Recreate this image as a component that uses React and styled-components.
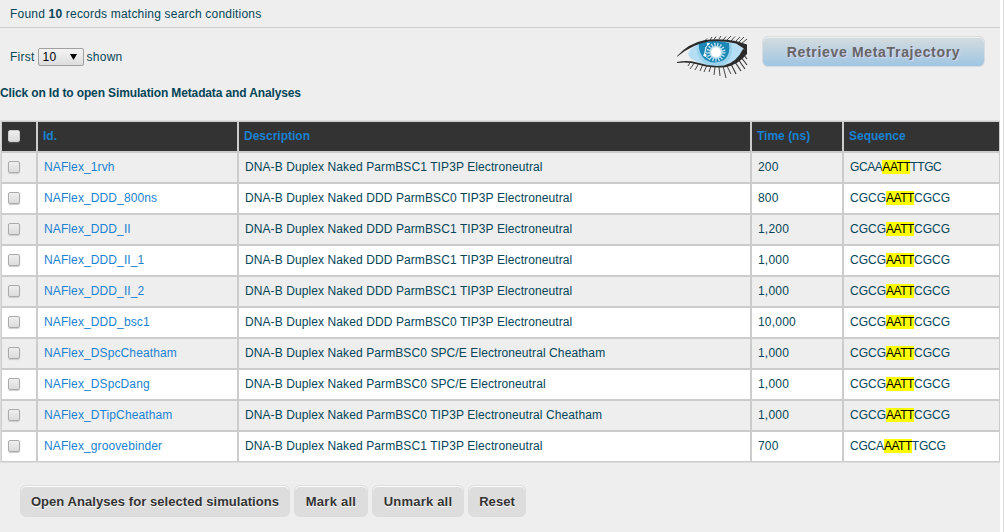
import React from "react";
import styled, { createGlobalStyle } from "styled-components";

const GlobalStyle = createGlobalStyle`
  *, *::before, *::after { box-sizing: border-box; }
  body { margin: 0; background: #fff; overflow: hidden; }
`;

const Page = styled.div`
  width: 1004px;
  height: 532px;
  padding-right: 3px;
  border-right: 1px solid #ddd;
  background: #fff;
  font: 12px/16px "Liberation Sans", Arial, sans-serif;
  color: #044558;
  white-space: nowrap;
`;

const Panel = styled.main`
  width: 1000px;
  height: 532px;
  overflow: hidden;
  background: #eee;
`;

const Summary = styled.div`
  height: 28px;
  padding: 6px 10px;
  border-bottom: 1px solid #ccc;
  letter-spacing: 0.2px;
`;

const Toolbar = styled.div`
  display: flex;
  align-items: flex-start;
  height: 56px;
  padding: 7px 15px 0 10px;
`;

const Limit = styled.label`
  display: flex;
  align-items: center;
  gap: 3px;
  flex: 1;
  padding-top: 13px;
  letter-spacing: 0.25px;
`;

const Picker = styled.span`
  display: flex;
  align-items: center;
  justify-content: space-between;
  width: 46px;
  height: 18px;
  padding: 0 6px 0 4px;
  border: 1px solid #a0a0a0;
  border-radius: 2px;
  background: linear-gradient(#f4f4f4, #ddd);
  color: #000;
`;

const Eye = styled.svg`
  width: 71px;
  height: 44px;
  margin-right: 14px;
`;

const Retrieve = styled.button`
  width: 223px;
  height: 31px;
  margin-top: 1px;
  padding: 1px 0 0;
  border: 1px solid #d9dcdf;
  border-radius: 6px;
  background: linear-gradient(#d6dcdf, #9fc5e2);
  box-shadow: inset 0 1px 0 #eef1f3;
  color: #666;
  font: bold 14px "Liberation Sans", Arial, sans-serif;
  letter-spacing: 0.68px;
  text-shadow: 1px 1px 0 #ddd6f2;
`;

const Hint = styled.h2`
  height: 37px;
  margin: 0;
  padding-top: 1px;
  font-size: 12px;
  line-height: 16px;
  letter-spacing: -0.13px;
`;

const Table = styled.div`
  display: grid;
  grid-template-columns: 34px 199px 511px 90px 155px;
  grid-auto-rows: 29px;
  gap: 2px;
  width: 999px;
  margin-left: 1px;
  padding: 1px;
  background: #ccc;
  box-shadow: 0 0 0 1px #ddd;
`;

const Cell = styled.div`
  padding: 6px 6px 0;
  background: ${(p) => (p.$odd ? "#eee" : "#fff")};
  letter-spacing: ${(p) => p.$spacing || 0}px;
`;

const HeadCell = styled.div`
  padding: 6px 5px 0;
  background: #333;
  color: #1a82d2;
  font-weight: bold;
`;

const Link = styled.a`
  color: #1a82d2;
`;

const Check = styled.span`
  display: block;
  width: 12px;
  height: 12px;
  margin: 2px 0 0 ${(p) => (p.$head ? 1 : 0)}px;
  border: 1px solid ${(p) => (p.$head ? "#ccc" : "#aaa")};
  border-radius: 2px;
  background: linear-gradient(#eee, #dcdcdc);
  box-shadow: 0 1px 1px ${(p) => (p.$head ? "#555" : "#ccc")};
`;

const Highlight = styled.mark`
  background: #ff0;
  color: #000;
  letter-spacing: -0.45px;
`;

const Actions = styled.div`
  display: flex;
  gap: 4px;
  padding: 23px 20px 0;
`;

const Action = styled.button`
  width: ${(p) => p.$width}px;
  height: 32px;
  padding: 0;
  border: 1px solid #ddd;
  border-radius: 6px;
  background: #ddd;
  box-shadow: inset 0 1px 0 #fff;
  color: #333;
  font: bold 13px "Liberation Sans", Arial, sans-serif;
  letter-spacing: ${(p) => p.$spacing || 0.06}px;
  text-shadow: 0 1px 0 #fff;
`;

const rows = [
  ["NAFlex_1rvh", "DNA-B Duplex Naked ParmBSC1 TIP3P Electroneutral", "200", "GCAA", "TTGC", -0.42],
  ["NAFlex_DDD_800ns", "DNA-B Duplex Naked DDD ParmBSC0 TIP3P Electroneutral", "800", "CGCG", "CGCG", 0],
  ["NAFlex_DDD_II", "DNA-B Duplex Naked DDD ParmBSC1 TIP3P Electroneutral", "1,200", "CGCG", "CGCG", 0],
  ["NAFlex_DDD_II_1", "DNA-B Duplex Naked DDD ParmBSC1 TIP3P Electroneutral", "1,000", "CGCG", "CGCG", 0],
  ["NAFlex_DDD_II_2", "DNA-B Duplex Naked DDD ParmBSC1 TIP3P Electroneutral", "1,000", "CGCG", "CGCG", 0],
  ["NAFlex_DDD_bsc1", "DNA-B Duplex Naked DDD ParmBSC0 TIP3P Electroneutral", "10,000", "CGCG", "CGCG", 0],
  ["NAFlex_DSpcCheatham", "DNA-B Duplex Naked ParmBSC0 SPC/E Electroneutral Cheatham", "1,000", "CGCG", "CGCG", 0],
  ["NAFlex_DSpcDang", "DNA-B Duplex Naked ParmBSC0 SPC/E Electroneutral", "1,000", "CGCG", "CGCG", 0],
  ["NAFlex_DTipCheatham", "DNA-B Duplex Naked ParmBSC0 TIP3P Electroneutral Cheatham", "1,000", "CGCG", "CGCG", 0],
  ["NAFlex_groovebinder", "DNA-B Duplex Naked ParmBSC1 TIP3P Electroneutral", "700", "CGCA", "TGCG", -0.2],
];

function EyeLogo() {
  return (
    <Eye viewBox="0 0 71 44" aria-hidden="true">
      <path d="M11 19Q15 10 26 7Q42 4 58 8L67 14Q65 24 56 29Q44 34 28 30Q13 26 11 19Z" fill="#b5def5" />
      <path d="M20 9Q38 3 55 9Q57 22 48 29Q38 34 27 28Q18 21 20 9Z" fill="#9bd3ef" />
      <path d="M22 8Q38 4 52 8Q54 19 47 25Q37 30 28 24.5Q21 18 22 8Z" fill="#1c86b4" />
      <circle cx="39" cy="17.3" r="7.8" fill="none" stroke="#c9e8f5" strokeWidth="3.4" strokeDasharray="1.2 1.7" />
      <circle cx="39" cy="17.3" r="6.6" fill="#b9dcea" />
      <circle cx="39" cy="17.3" r="5" fill="#fff" />
      <path d="M33 8Q27 12 29 18M29 12L27 21M28 21L33 25" fill="none" stroke="#d5effa" strokeWidth="1" />
      <circle cx="31" cy="9" r="1.2" fill="#fff" />
      <circle cx="28" cy="20" r="1.6" fill="#fff" />
      <path d="M0 21Q12 8 28 5Q43 3 59 6L70 9.5V18L66 13L59 8.5Q45 5.5 32 6.6Q16 9 0 21.7Z" fill="#2a2a2a" />
      <path d="M0 27Q11 24.5 22 28Q34 32 47 30.5Q60 27 66 14L70 16V19Q61 30 48 32.3Q33 33.5 21 29.6Q11 26.5 0 28Z" fill="#2a2a2a" />
      <path d="M28 5.5L30 3.5M33 5L35 2M37 4.5L39 1.5M42 4L44 1M46 5L49 1.5M50 5L54 1M54 6L58 1.5M58 7L63 2M61 8L67 2M64 9L70 4" fill="none" stroke="#333" strokeWidth=".9" />
      <path d="M66 19L70 24M64 22L70 30M61 24L68 34M58 27L64 36M54 29L59 39" fill="none" stroke="#333" strokeWidth="1.1" />
      <path d="M50 31L54 39M46 31L49 43M42 32L43 41M38 32L37 40M34 31L32 37M30 30L27 37M26 29L23 36M22 28L18 35M18 27L13 34M14 26L11 31" fill="none" stroke="#333" strokeWidth=".9" />
    </Eye>
  );
}

export default function App() {
  return (
    <Page>
      <GlobalStyle />
      <Panel>
        <Summary>Found <b>10</b> records matching search conditions</Summary>
        <Toolbar>
          <Limit>
            First
            <Picker>
              10
              <svg width="7" height="6" viewBox="0 0 7 6"><path d="M0 0H7L3.5 6Z" /></svg>
            </Picker>
            shown
          </Limit>
          <EyeLogo />
          <Retrieve>Retrieve MetaTrajectory</Retrieve>
        </Toolbar>
        <Hint>Click on Id to open Simulation Metadata and Analyses</Hint>
        <Table>
          <HeadCell><Check $head /></HeadCell>
          <HeadCell>Id.</HeadCell>
          <HeadCell>Description</HeadCell>
          <HeadCell>Time (ns)</HeadCell>
          <HeadCell>Sequence</HeadCell>
          {rows.map(([id, text, time, before, after, spacing], i) => {
            const odd = i % 2 === 0;
            return (
              <React.Fragment key={id}>
                <Cell $odd={odd}><Check /></Cell>
                <Cell $odd={odd} $spacing={0.11}><Link>{id}</Link></Cell>
                <Cell $odd={odd} $spacing={0.095}>{text}</Cell>
                <Cell $odd={odd} $spacing={0.2}>{time}</Cell>
                <Cell $odd={odd} $spacing={spacing}>{before}<Highlight>AATT</Highlight>{after}</Cell>
              </React.Fragment>
            );
          })}
        </Table>
        <Actions>
          <Action $width={270}>Open Analyses for selected simulations</Action>
          <Action $width={74} $spacing={0.25}>Mark all</Action>
          <Action $width={92} $spacing={0.2}>Unmark all</Action>
          <Action $width={58}>Reset</Action>
        </Actions>
      </Panel>
    </Page>
  );
}
